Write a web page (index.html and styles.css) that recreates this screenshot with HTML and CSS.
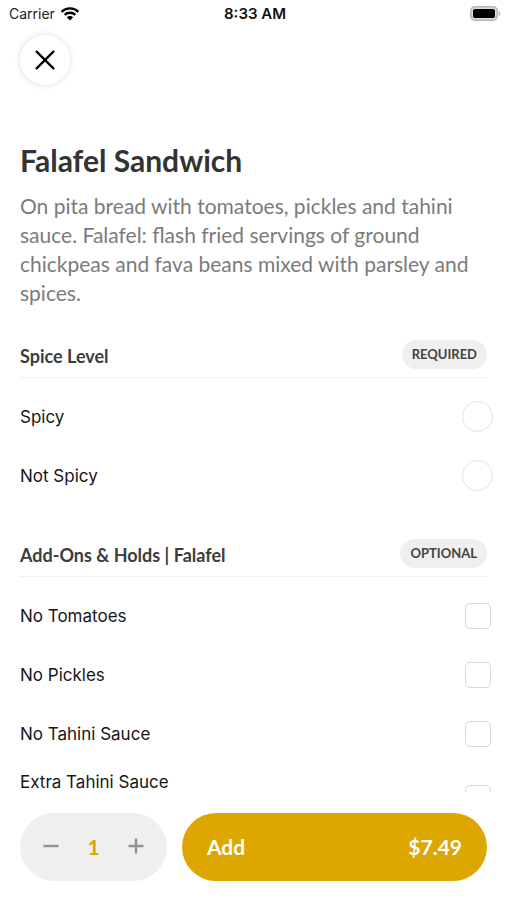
FILE: index.html
```html
<!DOCTYPE html>
<html lang="en">
<head>
<meta charset="utf-8">
<meta name="viewport" content="width=device-width, initial-scale=1">
<title>Falafel Sandwich</title>
<link rel="stylesheet" href="styles.css">
</head>
<body>
<header class="status">
  <div class="carrier">
    <span>Carrier</span>
    <svg width="20" height="14" viewBox="0 0 20 14" aria-hidden="true">
      <path d="M1.6 4.8C6.3.3 13.7.3 18.4 4.8M4.6 7.9c3-2.9 7.8-2.9 10.8 0" fill="none" stroke="#000" stroke-width="2.3"/>
      <path d="M6.8 10.2a4.6 4.6 0 0 1 6.4 0L10 13.5z" fill="#000"/>
    </svg>
  </div>
  <time class="clock">8:33 AM</time>
  <svg class="battery" width="31" height="15" viewBox="0 0 31 15" aria-hidden="true">
    <rect x=".8" y=".8" width="26.4" height="13.4" rx="4" fill="#ddd" stroke="#b5b5b5" stroke-width="1.5"/>
    <rect x="3" y="3" width="22" height="9" rx="1.8" fill="#000"/>
    <path d="M28.6 5.2c2.4.9 2.4 3.7 0 4.6z" fill="#b5b5b5"/>
  </svg>
</header>
<main class="content">
  <button class="close" type="button" aria-label="Close">
    <svg width="20" height="20" viewBox="0 0 20 20" aria-hidden="true"><path d="M1.6 1.6l16.8 16.8M18.4 1.6L1.6 18.4" stroke="#000" stroke-width="2.2" stroke-linecap="round"/></svg>
  </button>
  <h1>Falafel Sandwich</h1>
  <p class="description">On pita bread with tomatoes, pickles and tahini sauce. Falafel: flash fried servings of ground chickpeas and fava beans mixed with parsley and spices.</p>

  <section class="group" aria-labelledby="spice">
    <div class="group-head"><h2 id="spice">Spice Level</h2><span class="tag">REQUIRED</span></div>
    <div class="options">
      <label class="option"><span>Spicy</span><input type="radio" name="spice"></label>
      <label class="option"><span>Not Spicy</span><input type="radio" name="spice"></label>
    </div>
  </section>

  <section class="group" aria-labelledby="addons">
    <div class="group-head"><h2 id="addons">Add-Ons &amp; Holds | Falafel</h2><span class="tag">OPTIONAL</span></div>
    <div class="options">
      <label class="option"><span>No Tomatoes</span><input type="checkbox"></label>
      <label class="option"><span>No Pickles</span><input type="checkbox"></label>
      <label class="option"><span>No Tahini Sauce</span><input type="checkbox"></label>
      <label class="option tall"><span>Extra Tahini Sauce</span><input type="checkbox"></label>
    </div>
  </section>
</main>
<footer class="order">
  <div class="stepper">
    <button type="button" aria-label="Decrease quantity"><svg width="16" height="16" viewBox="0 0 16 16" aria-hidden="true"><path d="M.5 8h15" stroke="#929292" stroke-width="2.4"/></svg></button>
    <output>1</output>
    <button type="button" aria-label="Increase quantity"><svg width="16" height="16" viewBox="0 0 16 16" aria-hidden="true"><path d="M.5 8h15M8 .5v15" stroke="#929292" stroke-width="2.4"/></svg></button>
  </div>
  <button class="add" type="button"><span>Add</span><span>$7.49</span></button>
</footer>
</body>
</html>
```
FILE: styles.css
```css
* { box-sizing: border-box; }

body {
  margin: 0;
  height: 100vh;
  display: flex;
  flex-direction: column;
  overflow: hidden;
  background: #fff;
  color: #333;
  font-family: Lato, sans-serif;
}

button { border: 0; padding: 0; font: inherit; cursor: pointer; }
svg { display: block; }

.status {
  flex: none;
  display: grid;
  grid-template-columns: 1fr auto 1fr;
  align-items: center;
  height: 28px;
  padding: 0 6px 0 9px;
  color: #222;
  font: 14px/20px Inter, sans-serif;
}
.carrier { display: flex; align-items: center; gap: 5px; }
.clock { font-size: 15px; font-weight: 600; color: #111; }
.battery { justify-self: end; margin-bottom: 2px; }

.content {
  flex: 1;
  min-height: 0;
  overflow: hidden;
  padding: 7px 20px 0;
}

.close {
  display: grid;
  place-items: center;
  width: 50px;
  height: 50px;
  border-radius: 50%;
  background: #fff;
  box-shadow: 0 0 6px rgba(0, 0, 0, 0.14);
}

h1 {
  margin: 57px 0 0;
  font-size: 30px;
  line-height: 36px;
  font-weight: 700;
}
.description {
  margin: 13px 0 0;
  color: #7b7b7b;
  font-size: 21px;
  line-height: 29px;
}

.group { margin-top: 33px; }
.group-head {
  display: flex;
  align-items: center;
  justify-content: space-between;
  padding-bottom: 8px;
  border-bottom: 1px solid #f1f1f1;
}
h2 {
  margin: 0;
  padding-top: 3px;
  font-size: 18px;
  line-height: 24px;
  font-weight: 700;
  color: #3c3c3c;
}
.tag {
  padding: 0 10px;
  border-radius: 15px;
  background: #efefef;
  color: #444;
  font-size: 13px;
  line-height: 29px;
  font-weight: 700;
}

.options { padding: 9px 0 1px; margin-right: -6px; }
.option {
  display: flex;
  align-items: center;
  justify-content: space-between;
  height: 59px;
  color: #161616;
  font: 17px/20px Inter, sans-serif;
}
.option.tall { height: 70px; }
.tall span { align-self: flex-start; padding-top: 9px; }

input {
  appearance: none;
  flex: none;
  margin: 0;
  background: #fff;
}
input[type="radio"] {
  width: 31px;
  height: 31px;
  border: 1px solid #e4e4e4;
  border-radius: 50%;
}
input[type="checkbox"] {
  width: 26px;
  height: 26px;
  margin-right: 2px;
  border: 1px solid #d8d8d8;
  border-radius: 5px;
}

.order {
  flex: none;
  display: flex;
  gap: 15px;
  padding: 21px 20px 19px;
  background: #fff;
  font-size: 21px;
  font-weight: 700;
}
.stepper {
  flex: none;
  display: flex;
  align-items: center;
  justify-content: space-between;
  width: 147px;
  padding: 0 16px 2px;
  border-radius: 34px;
  background: #efefef;
  color: #dda600;
}
.stepper button {
  display: grid;
  place-items: center;
  width: 30px;
  height: 44px;
  background: none;
}
.add {
  flex: 1;
  display: flex;
  align-items: center;
  justify-content: space-between;
  height: 68px;
  padding: 0 25px 2px;
  border-radius: 34px;
  background: #dda600;
  color: #fff;
}
```
